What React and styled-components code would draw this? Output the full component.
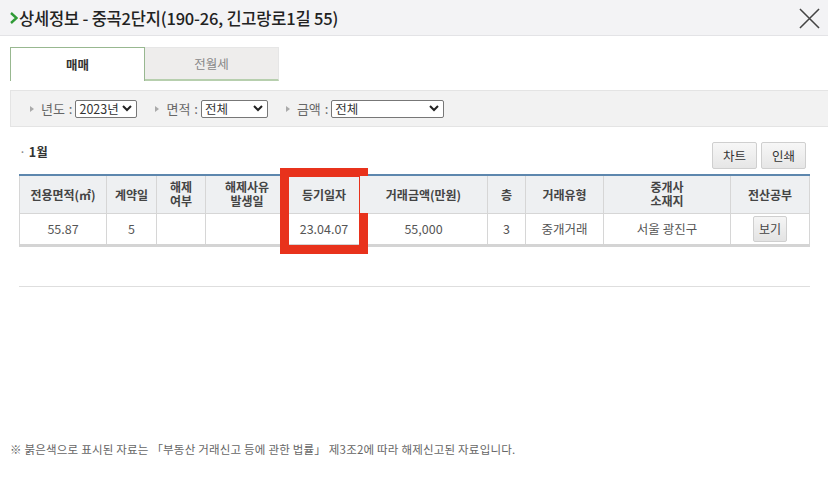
import React from "react";
import styled, { createGlobalStyle } from "styled-components";

const GlobalStyle = createGlobalStyle`
  html, body {
    margin: 0;
    padding: 0;
    background: #fff;
    font-family: "Noto Sans CJK KR", "Noto Sans", sans-serif;
    color: #333;
  }
  * { box-sizing: border-box; }
`;

const columns = [
  { title: "전용면적(㎡)", width: 87 },
  { title: "계약일", width: 50 },
  { title: ["해제", "여부"], width: 49 },
  { title: ["해제사유", "발생일"], width: 83 },
  { title: "등기일자", width: 71, mark: true },
  { title: "거래금액(만원)", width: 128 },
  { title: "층", width: 38 },
  { title: "거래유형", width: 78 },
  { title: ["중개사", "소재지"], width: 127 },
  { title: "전산공부", width: 79 },
];

const rows = [["55.87", "5", "", "", "23.04.07", "55,000", "3", "중개거래", "서울 광진구", "btn"]];

const filters = [
  { label: "년도", value: "2023년", width: 62 },
  { label: "면적", value: "전체", width: 67 },
  { label: "금액", value: "전체", width: 113 },
];

export default function App() {
  return (
    <Popup>
      <GlobalStyle />
      <Header>
        <Title>
          <Chevron viewBox="0 0 8 12">
            <path d="M1 1 L6.5 6 L1 11" fill="none" stroke="#2f9a36" strokeWidth="2.4" />
          </Chevron>
          상세정보 - 중곡2단지(190-26, 긴고랑로1길 55)
        </Title>
        <CloseBtn viewBox="0 0 22 22">
          <path d="M1 1 L21 21 M21 1 L1 21" stroke="#444" strokeWidth="1.6" />
        </CloseBtn>
      </Header>

      <Body>
        <Tabs>
          <Tab $active>매매</Tab>
          <Tab>전월세</Tab>
        </Tabs>

        <FilterBar>
          {filters.map((f) => (
            <FilterItem key={f.label}>
              <Arrow />
              <Label>{f.label} :</Label>
              <Select $w={f.width}>
                <span>{f.value}</span>
                <svg width="10" height="7" viewBox="0 0 10 7">
                  <path d="M1 1 L5 5 L9 1" fill="none" stroke="#222" strokeWidth="2" />
                </svg>
              </Select>
            </FilterItem>
          ))}
        </FilterBar>

        <Section>
          <SectionTop>
            <Month>
              <Dot>·</Dot> 1월
            </Month>
            <BtnGroup>
              <GreyBtn>차트</GreyBtn>
              <GreyBtn>인쇄</GreyBtn>
            </BtnGroup>
          </SectionTop>

          <Table>
            <colgroup>
              {columns.map((c, i) => (
                <col key={i} style={{ width: c.width }} />
              ))}
            </colgroup>
            <thead>
              <tr>
                {columns.map((c, i) => (
                  <Th key={i}>
                    {Array.isArray(c.title)
                      ? c.title.map((t) => <HeadLine key={t}>{t}</HeadLine>)
                      : c.title}
                    {c.mark && <MarkBox />}
                  </Th>
                ))}
              </tr>
            </thead>
            <tbody>
              {rows.map((r, ri) => (
                <tr key={ri}>
                  {r.map((v, i) => (
                    <Td key={i}>{v === "btn" ? <ViewBtn>보기</ViewBtn> : v}</Td>
                  ))}
                </tr>
              ))}
            </tbody>
          </Table>

          <Divider />
        </Section>

        <Note>※ 붉은색으로 표시된 자료는 「부동산 거래신고 등에 관한 법률」 제3조2에 따라 해제신고된 자료입니다.</Note>
      </Body>
    </Popup>
  );
}

const Popup = styled.div`
  width: 828px;
  height: 499px;
  background: #fff;
  display: flex;
  flex-direction: column;
  overflow: hidden;
`;

const Header = styled.header`
  height: 36px;
  background: #f3f3f5;
  border-bottom: 1px solid #e3e3e6;
  display: flex;
  align-items: center;
  justify-content: space-between;
  padding: 0 8px 0 10px;
`;

const Title = styled.h1`
  margin: 0;
  font-size: 16.5px;
  font-weight: 500;
  color: #222;
  display: flex;
  align-items: center;
  letter-spacing: -0.2px;
`;

const Chevron = styled.svg`
  width: 8px;
  height: 12px;
  margin-right: 1px;
`;

const CloseBtn = styled.svg`
  width: 21px;
  height: 21px;
  margin-top: 1px;
`;

const Body = styled.div`
  flex: 1;
  display: flex;
  flex-direction: column;
  padding: 11px 0 0 10px;
`;

const Tabs = styled.div`
  display: flex;
`;

const Tab = styled.div`
  width: ${(p) => (p.$active ? 135 : 134)}px;
  height: 34px;
  display: flex;
  align-items: center;
  justify-content: center;
  font-size: 12.5px;
  font-weight: ${(p) => (p.$active ? 700 : 400)};
  color: ${(p) => (p.$active ? "#333" : "#888")};
  background: ${(p) => (p.$active ? "#fff" : "#eeedec")};
  border: 1px solid ${(p) => (p.$active ? "#98b890" : "#e6e6e6")};
  border-bottom: ${(p) => (p.$active ? "none" : "2px solid #b7cfae")};
  border-left-width: ${(p) => (p.$active ? "1px" : "0")};
`;

const FilterBar = styled.div`
  margin-top: 9px;
  height: 37px;
  background: #f2f2f2;
  border: 1px solid #e4e4e4;
  border-right: none;
  display: flex;
  align-items: center;
  padding-left: 19px;
  gap: 18px;
`;

const FilterItem = styled.div`
  display: flex;
  align-items: center;
  font-size: 13px;
  color: #666;
`;

const Label = styled.span`
  word-spacing: 1px;
`;

const Arrow = styled.span`
  width: 0;
  height: 0;
  border-left: 4px solid #aaa;
  border-top: 3.5px solid transparent;
  border-bottom: 3.5px solid transparent;
  margin-right: 7px;
`;

const Select = styled.div`
  width: ${(p) => p.$w}px;
  height: 18px;
  margin-left: 3px;
  border: 1px solid #777;
  border-radius: 2px;
  background: #fff;
  display: flex;
  align-items: center;
  justify-content: space-between;
  padding: 0 4px 0 3px;
  font-size: 12.5px;
  color: #333;
`;

const Section = styled.div`
  padding: 0 18px 0 9px;
  margin-top: 14px;
`;

const SectionTop = styled.div`
  display: flex;
  justify-content: space-between;
  align-items: flex-start;
  height: 33px;
`;

const Month = styled.div`
  font-size: 12.5px;
  font-weight: 700;
  color: #333;
  margin-top: 1px;
`;

const Dot = styled.span`
  font-weight: 400;
  color: #888;
`;

const BtnGroup = styled.div`
  display: flex;
  gap: 4px;
  margin-top: 1px;
  margin-right: 4px;
`;

const GreyBtn = styled.button`
  width: 45px;
  height: 27px;
  border: 1px solid #cfcfcf;
  border-radius: 2px;
  background: linear-gradient(#f7f7f7, #e6e6e6);
  font-family: inherit;
  font-size: 12.5px;
  color: #333;
  padding: 0;
`;

const Table = styled.table`
  width: 791px;
  border-collapse: collapse;
  table-layout: fixed;
  border-top: 2px solid #5d87ae;
  border-bottom: 3px solid #d4d4d4;
`;

const Th = styled.th`
  position: relative;
  height: 38px;
  background: #eef0f2;
  border: 1px solid #d6d6d6;
  border-top: none;
  font-size: 12px;
  font-weight: 700;
  color: #444;
  padding: 0;
  text-align: center;
`;

const HeadLine = styled.span`
  display: block;
  height: 14px;
  line-height: 14px;
`;

const MarkBox = styled.span`
  position: absolute;
  left: -9px;
  right: -9px;
  top: -8px;
  height: 86px;
  border: 9px solid #e8321c;
  pointer-events: none;
`;

const Td = styled.td`
  height: 32px;
  border: 1px solid #d6d6d6;
  border-top: none;
  border-bottom: none;
  font-size: 12.5px;
  color: #555;
  text-align: center;
  padding: 0;
`;

const ViewBtn = styled.button`
  width: 34px;
  height: 26px;
  border: 1px solid #cfcfcf;
  border-radius: 2px;
  background: linear-gradient(#f5f5f5, #e3e3e3);
  font-family: inherit;
  font-size: 12px;
  color: #444;
  padding: 0;
  vertical-align: middle;
`;

const Divider = styled.div`
  margin-top: 39px;
  height: 1px;
  background: #dedede;
  width: 791px;
`;

const Note = styled.p`
  margin: 154px 0 0;
  font-size: 11.5px;
  color: #666;
  letter-spacing: 0.2px;
`;
